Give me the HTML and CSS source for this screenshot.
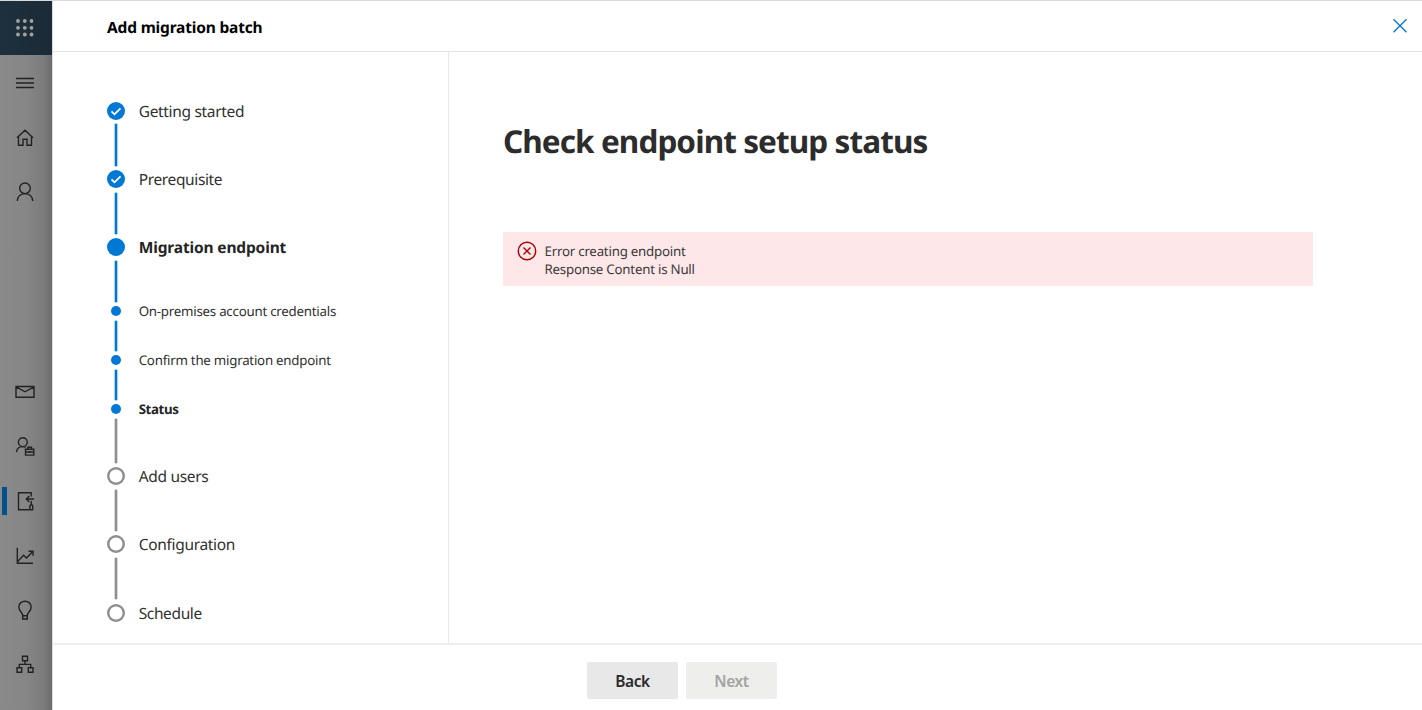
FILE: index.html
```html
<!DOCTYPE html>
<html lang="en">
<head>
<meta charset="utf-8">
<title>Add migration batch</title>
<link rel="stylesheet" href="styles.css">
</head>
<body>
<div class="app">
  <nav class="rail">
    <div class="launcher">
      <svg width="18" height="18" viewBox="0 0 18 18" fill="#a3a39c"><circle cx="2" cy="2" r="1.9"/><circle cx="8.800" cy="2" r="1.9"/><circle cx="15.500" cy="2" r="1.9"/><circle cx="2" cy="8.800" r="1.9"/><circle cx="8.800" cy="8.800" r="1.9"/><circle cx="15.500" cy="8.800" r="1.9"/><circle cx="2" cy="15.500" r="1.9"/><circle cx="8.800" cy="15.500" r="1.9"/><circle cx="15.500" cy="15.500" r="1.9"/></svg>
    </div>
    <a class="cell"><svg class="ico" viewBox="0 0 20 20"><path d="M1 5.500h18M1 10h18M1 14.500h18"/></svg></a>
    <a class="cell"><svg class="ico" viewBox="0 0 20 20"><path d="M2 9.700L10 2.200l8 7.500M3.500 8.500V17.200H8v-6h4v6h4.500V8.500"/></svg></a>
    <a class="cell"><svg class="ico" viewBox="0 0 20 20"><circle cx="10" cy="6.300" r="5.300"/><path d="M2.300 19c.3-4.500 3.500-7.400 7.700-7.400s7.400 2.900 7.700 7.400"/></svg></a>
    <a class="cell mail"><svg class="ico" viewBox="0 0 20 20"><path d="M1 4.500h18v10.700H1zM1 4.800l9 5 9-5"/></svg></a>
    <a class="cell"><svg class="ico" viewBox="0 0 20 20"><circle cx="7.800" cy="6.200" r="4.400"/><path d="M1.500 16.200c.3-3.300 2.700-5.600 6.300-5.600 1.200 0 2 .2 2.800.7M10.500 13.200h8.300v5.900h-8.300zM10.500 16h8.300M12.800 13.200v-2h3.700v2M14.600 15v2"/></svg></a>
    <a class="cell current"><svg class="ico" viewBox="0 0 20 20"><path d="M16.200 5.500V1.700H3.500v17H14M19 8h-7.500M14.300 5l-3 3 3 3M16.300 10v3.500M14.900 18.700v-4q1.400-2 2.800 0v4z"/></svg></a>
    <a class="cell"><svg class="ico" viewBox="0 0 20 20"><path d="M2.300 2.700v15.500H18M2.500 16.700l6-6.500 3 2.800 6-6.300M13.500 6.200H18v4.500"/></svg></a>
    <a class="cell"><svg class="ico lamp" viewBox="0 0 20 20"><path d="M7.700 15.700c0-3.700-3.900-4.300-3.900-8.600C3.800 3.700 6.500 1.200 10 1.200s6.200 2.500 6.200 5.900c0 4.300-3.900 4.900-3.900 8.600zM7.700 15.700V19h4.600v-3.300"/></svg></a>
    <a class="cell"><svg class="ico lamp" viewBox="0 0 20 20"><path d="M7.500 2.200h5v4.600h-5zM2 13.700h4.700v4.600H2zM13.300 13.700H18v4.600h-4.700zM10 6.800v3.600M4.300 13.700v-3.300h11.400v3.300"/></svg></a>
  </nav>
  <main class="panel">
    <header class="top">
      <span class="title">Add migration batch</span>
      <svg class="close" viewBox="0 0 16 16"><path d="M1.500 1.200l13 13M14.500 1.200l-13 13"/></svg>
    </header>
    <div class="body">
      <aside class="steps">
        <div class="step done"><div class="track"><svg class="dot" viewBox="0 0 18 18"><path d="M4.500 9.300l3 3 6-6"/></svg><i class="line"></i></div><span class="label">Getting started</span></div>
        <div class="step done"><div class="track"><svg class="dot" viewBox="0 0 18 18"><path d="M4.500 9.300l3 3 6-6"/></svg><i class="line"></i></div><span class="label tight">Prerequisite</span></div>
        <div class="step done"><div class="track"><i class="dot"></i><i class="line"></i></div><span class="label bold">Migration endpoint</span></div>
        <div class="step sub done"><div class="track"><i class="dot"></i><i class="line"></i></div><span class="label">On-premises account credentials</span></div>
        <div class="step sub done"><div class="track"><i class="dot"></i><i class="line"></i></div><span class="label">Confirm the migration endpoint</span></div>
        <div class="step sub last"><div class="track"><i class="dot"></i><i class="line"></i></div><span class="label bold">Status</span></div>
        <div class="step todo"><div class="track"><i class="dot"></i><i class="line"></i></div><span class="label">Add users</span></div>
        <div class="step todo"><div class="track"><i class="dot"></i><i class="line"></i></div><span class="label">Configuration</span></div>
        <div class="step todo end"><div class="track"><i class="dot"></i></div><span class="label tight">Schedule</span></div>
      </aside>
      <section class="content">
        <h1 class="heading">Check endpoint setup status</h1>
        <div class="error">
          <svg class="erricon" viewBox="0 0 20 20"><circle cx="10" cy="10" r="8.700"/><path d="M6.500 6.500l7 7M13.500 6.500l-7 7"/></svg>
          <div class="errtext"><div>Error creating endpoint</div><div>Response Content is Null</div></div>
        </div>
      </section>
    </div>
    <footer class="actions">
      <button class="btn">Back</button>
      <button class="btn off" disabled>Next</button>
    </footer>
  </main>
</div>
</body>
</html>
```
FILE: styles.css
```css
* { box-sizing: border-box; }
body { margin: 0; background: #fff; font-family: "Noto Sans", "Open Sans", sans-serif; color: #323130; text-rendering: geometricPrecision; }
.app { display: flex; width: 1422px; height: 710px; overflow: hidden; border-top: 1px solid #dadada; }
svg { display: block; }
.rail { width: 52px; flex: none; background: linear-gradient(90deg, #8a8a8a 0, #868686 50%, #7b7b7b 85%, #6b6b6b 100%); display: flex; flex-direction: column; }
.launcher { height: 54px; margin-bottom: 1px; flex: none; background: linear-gradient(90deg, #1e303f, #1b2a36); display: flex; align-items: center; padding: 0 0 1px 16px; }
.cell { height: 54.5px; flex: none; display: flex; align-items: center; padding-left: 15px; }
.mail { margin-top: 145px; }
.ico { width: 20px; height: 20px; fill: none; stroke: #222; stroke-width: 1.4; }
.lamp { margin-left: -0.5px; }
.current { padding-left: 0; }
.current::before { content: ""; width: 5px; height: 28px; background: #02508c; margin: 0 8px 0 2px; }
.panel { flex: 1; display: flex; flex-direction: column; border-left: 1px solid #dcdcdc; }
.top { height: 51px; flex: none; border-bottom: 1px solid #e4e4e4; display: flex; align-items: center; justify-content: space-between; padding: 0 14px 0 54px; }
.title { font-size: 15.5px; font-weight: 700; color: #000; white-space: nowrap; letter-spacing: -0.18px; padding-top: 1px; }
.close { width: 16px; height: 16px; fill: none; stroke: #0078d4; stroke-width: 1.3; }
.body { height: 591px; flex: none; display: flex; }
.steps { width: 396px; flex: none; border-right: 1px solid #e8e8e8; padding: 50px 0 0 54px; }
.step { height: 68.15px; display: flex; gap: 13.700px; }
.track { width: 18px; display: flex; flex-direction: column; align-items: center; }
.dot { width: 18px; height: 18px; flex: none; border-radius: 50%; background: #0078d4; fill: none; stroke: #fff; stroke-width: 1.8; }
.line { width: 2px; flex: 1; margin: 4.400px 0; background: #0078d4; box-shadow: 0 0 0.8px 0.3px #0078d4; }
.sub { height: 49px; }
.sub .dot { width: 10px; height: 10px; margin-top: -0.2px; }
.label { font-size: 15.5px; line-height: 18px; white-space: nowrap; letter-spacing: -0.32px; }
.tight { letter-spacing: -0.37px; }
.bold { font-weight: 700; color: #242424; letter-spacing: -0.15px; }
.sub .label { font-size: 13.3px; line-height: 10px; letter-spacing: -0.24px; }
.sub .bold { letter-spacing: -0.4px; }
.last { height: 62.800px; }
.last .line, .todo .line { background: #8f8f8f; box-shadow: 0 0 0.8px 0.3px #8f8f8f; }
.todo .dot { background: radial-gradient(circle, #fff 6.200px, #8f8f8f 6.800px); }
.end { height: 18px; }
.content { padding: 65px 0 0 54px; }
.heading { margin: 0; font-size: 31.5px; line-height: 50px; font-weight: 700; letter-spacing: -0.92px; color: #2c2c2c; white-space: nowrap; }
.error { margin-top: 65px; width: 810px; height: 54px; background: #fde7e9; display: flex; padding: 9.500px 13.500px; gap: 8px; }
.erricon { width: 20px; height: 20px; margin-top: -0.5px; fill: none; stroke: #a80000; stroke-width: 1.4; }
.errtext { font-size: 13.3px; line-height: 18px; letter-spacing: -0.23px; white-space: nowrap; color: #3b3a39; }
.actions { flex: 1; border-top: 2px solid #eee; display: flex; gap: 8px; padding: 17px 0 0 534px; }
.btn { width: 91px; height: 36.500px; border: 0; border-radius: 2px; background: #e8e8e8; font: 600 15.5px "Noto Sans", sans-serif; letter-spacing: -0.4px; color: #2b2b2b; padding: 2px 0 0; }
.off { background: #eeeeec; color: #a3a3a1; }
```
